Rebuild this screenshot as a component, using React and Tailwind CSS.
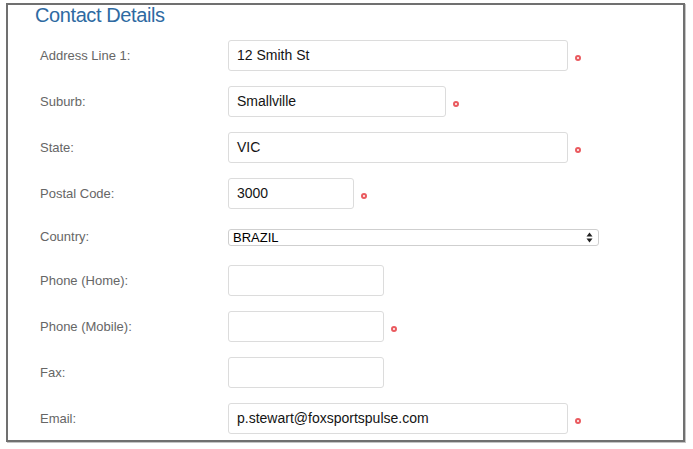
// Contact Details — form panel with required markers.
const ROWS = [
  { label: 'Address Line 1:', value: '12 Smith St', w: 'w-[340px]', req: true },
  { label: 'Suburb:', value: 'Smallville', w: 'w-[218px]', req: true },
  { label: 'State:', value: 'VIC', w: 'w-[340px]', req: true },
  { label: 'Postal Code:', value: '3000', w: 'w-[126px]', req: true },
  { label: 'Country:', select: 'BRAZIL' },
  { label: 'Phone (Home):', value: '', w: 'w-[156px]' },
  { label: 'Phone (Mobile):', value: '', w: 'w-[156px]', req: true },
  { label: 'Fax:', value: '', w: 'w-[156px]' },
  { label: 'Email:', value: 'p.stewart@foxsportspulse.com', w: 'w-[340px]', req: true },
]

function Required() {
  return (
    <span className="ml-[7px] mt-[5px] box-border h-[6px] w-[6px] rounded-full border-2 border-[#ea5a5f]" />
  )
}

function Campo({ row }) {
  if (row.select) {
    return (
      <div className="flex h-[26px] items-center">
        <span className="w-[188px] text-[13px] text-[#666]">{row.label}</span>
        <div className="flex h-[17px] w-[371px] items-center justify-between rounded-[3px] border border-[#cfcfcf] bg-white pl-[4px] pr-[5px]">
          <span className="text-[13px] font-medium leading-none text-black">{row.select}</span>
          <svg width="7" height="11" viewBox="0 0 7 11">
            <path d="M3.5 0.5 L6.5 4.5 L0.5 4.5 Z" fill="#222" />
            <path d="M3.5 10.5 L6.5 6.5 L0.5 6.5 Z" fill="#222" />
          </svg>
        </div>
      </div>
    )
  }
  return (
    <div className="flex h-[31px] items-center">
      <span className="w-[188px] text-[13px] text-[#666]">{row.label}</span>
      <div
        className={`flex h-[31px] items-center rounded-[3px] border border-[#dcdcdc] bg-white pl-[8px] text-[14px] text-[#141414] ${row.w}`}
      >
        {row.value}
      </div>
      {row.req && <Required />}
    </div>
  )
}

export default function App() {
  return (
    <div className="h-[449px] w-[693px] bg-white font-['Liberation_Sans',Arial,sans-serif]">
      <div className="ml-[6px] mt-[3px] box-border h-[439px] w-[679px] border-2 border-[#707070] shadow-[1px_1px_0_#c4c4c4] pl-[32px]">
        <h2 className="-ml-[5px] text-[20px] leading-[20px] tracking-[-0.4px] text-[#2e6aa2]">
          Contact Details
        </h2>
        <div className="mt-[15px] flex flex-col gap-[15px]">
          {ROWS.map((r) => (
            <Campo key={r.label} row={r} />
          ))}
        </div>
      </div>
    </div>
  )
}
